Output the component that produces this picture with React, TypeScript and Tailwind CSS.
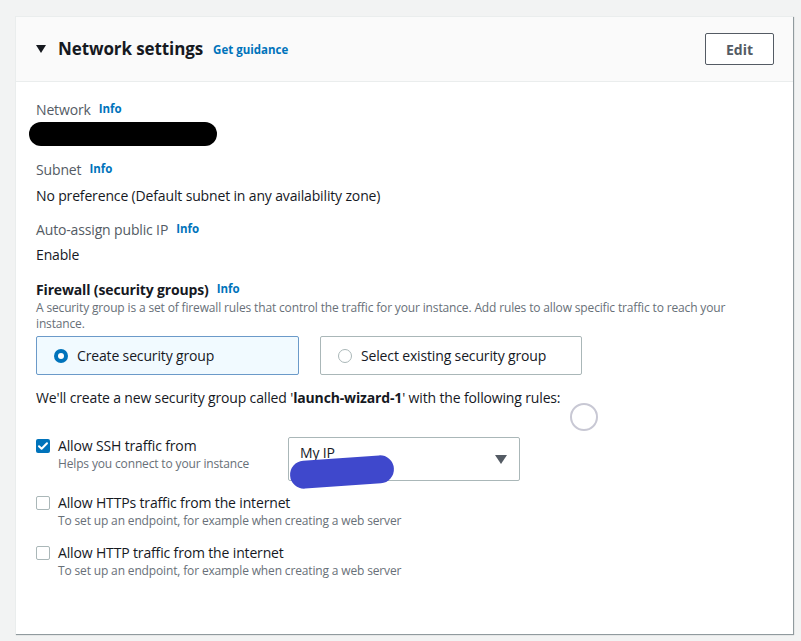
import React from 'react';

const font = { fontFamily: '"Open Sans", "Noto Sans", Arial, sans-serif' };

function Info() {
  return <span className="ml-2 text-[11.5px] font-bold tracking-normal text-[#0073bb]">Info</span>;
}

function Checkbox({ checked }: { checked?: boolean }) {
  if (checked) {
    return (
      <span className="mt-[2px] flex h-[14px] w-[14px] shrink-0 items-center justify-center rounded-[2px] bg-[#0073bb]">
        <svg viewBox="0 0 14 14" className="h-[14px] w-[14px]" fill="none" stroke="white" strokeWidth={2}>
          <path d="M3 7.2l2.6 2.6L11 4.2" strokeLinecap="round" strokeLinejoin="round" />
        </svg>
      </span>
    );
  }
  return <span className="mt-[2px] block h-[14px] w-[14px] shrink-0 rounded-[2px] border border-[#aab7b8] bg-white" />;
}

export default function App() {
  return (
    <div className="min-h-[641px] bg-[#f2f3f3] pl-[15px] pr-[8px] pt-[16px]" style={font}>
      <div className="h-[618px] w-[778px] bg-white shadow-[1px_1px_1px_0_rgba(0,28,36,0.3),1px_1px_0_0_rgba(0,28,36,0.15)] border-l border-t border-[#eaeded]">
        {/* Header */}
        <div className="flex h-[65px] items-center justify-between border-b border-[#eaeded] bg-[#fafafa] pl-[20px] pr-[19px]">
          <div className="flex items-center">
            <svg viewBox="0 0 10 8" className="h-[8px] w-[10px] fill-[#16191f]">
              <path d="M0 0h10L5 8z" />
            </svg>
            <span className="ml-[12px] text-[17px] font-bold tracking-[-0.1px] text-[#16191f]">Network settings</span>
            <span className="ml-[10px] mt-[2px] text-[11.5px] font-bold text-[#0073bb]">Get guidance</span>
          </div>
          <button className="h-[32px] w-[69px] rounded-[2px] border border-[#545b64] bg-white text-[14px] font-bold text-[#545b64]">
            Edit
          </button>
        </div>

        {/* Body */}
        <div className="pl-[20px] pt-[16px] text-[14px] tracking-[-0.15px] text-[#16191f]">
          <div className="flex h-[22px] items-center text-[#545b64]">
            Network <Info />
          </div>
          <div className="-ml-[7px] mt-[2px] h-[24px] w-[188px] rounded-full bg-black" />

          <div className="mt-[12px] flex h-[22px] items-center text-[#545b64]">
            Subnet <Info />
          </div>
          <div className="mt-[5px] h-[22px] leading-[22px]">No preference (Default subnet in any availability zone)</div>

          <div className="mt-[11px] flex h-[22px] items-center text-[#545b64]">
            Auto-assign public IP <Info />
          </div>
          <div className="mt-[4px] h-[22px] leading-[22px]">Enable</div>

          <div className="mt-[12px] flex h-[22px] items-center font-bold">
            Firewall (security groups) <Info />
          </div>
          <p className="w-[720px] text-[12px] leading-[16px] text-[#687078]">
            A security group is a set of firewall rules that control the traffic for your instance. Add rules to allow specific traffic to reach your
            instance.
          </p>

          <div className="mt-[4px] flex gap-[21px]">
            <div className="flex h-[39px] w-[263px] items-center rounded-[2px] border border-[#6b9ac9] bg-[#f1faff] pl-[17px]">
              <span className="flex h-[14px] w-[14px] items-center justify-center rounded-full bg-[#0073bb]">
                <span className="h-[6px] w-[6px] rounded-full bg-white" />
              </span>
              <span className="ml-[9px]">Create security group</span>
            </div>
            <div className="flex h-[39px] w-[262px] items-center rounded-[2px] border border-[#aab7b8] bg-white pl-[17px]">
              <span className="h-[14px] w-[14px] rounded-full border border-[#aab7b8]" />
              <span className="ml-[9px]">Select existing security group</span>
            </div>
          </div>

          <div className="relative mt-[12px] h-[22px] leading-[22px]">
            We'll create a new security group called '<span className="font-bold">launch-wizard-1</span>' with the following rules:
            <span className="absolute left-[534px] top-[16px] h-[28px] w-[28px] rounded-full border-2 border-[#c8c8d4]" />
          </div>

          {/* SSH rule */}
          <div className="mt-[28px] flex">
            <div className="flex w-[252px] gap-[8px]">
              <Checkbox checked />
              <div>
                <div className="leading-[18px]">Allow SSH traffic from</div>
                <div className="mt-[1px] text-[12px] leading-[16px] text-[#687078]">Helps you connect to your instance</div>
              </div>
            </div>
            <div className="relative flex h-[44px] w-[232px] items-start justify-between rounded-[2px] border border-[#aab7b8] bg-white pl-[11px] pr-[12px] pt-[6px]">
              <span className="leading-[18px]">My IP</span>
              <svg viewBox="0 0 12 9" className="mt-[11px] h-[9px] w-[12px] fill-[#545b64]">
                <path d="M0 0h12L6 9z" />
              </svg>
              <span className="absolute left-[1px] top-[20px] h-[28px] w-[104px] -rotate-[4deg] rounded-full bg-[#3f48cc]" />
            </div>
          </div>

          <div className="mt-[13px] flex gap-[8px]">
            <Checkbox />
            <div>
              <div className="leading-[18px]">Allow HTTPs traffic from the internet</div>
              <div className="mt-[1px] text-[12px] leading-[16px] text-[#687078]">To set up an endpoint, for example when creating a web server</div>
            </div>
          </div>

          <div className="mt-[15px] flex gap-[8px]">
            <Checkbox />
            <div>
              <div className="leading-[18px]">Allow HTTP traffic from the internet</div>
              <div className="mt-[1px] text-[12px] leading-[16px] text-[#687078]">To set up an endpoint, for example when creating a web server</div>
            </div>
          </div>
        </div>
      </div>
    </div>
  );
}
